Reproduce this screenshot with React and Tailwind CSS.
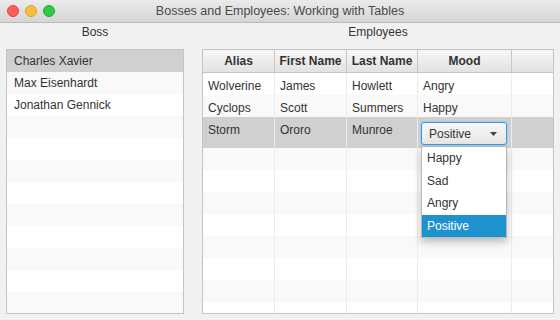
import React from 'react';

const bosses = ['Charles Xavier', 'Max Eisenhardt', 'Jonathan Gennick'];

const employees = [
    { alias: 'Wolverine', first: 'James', last: 'Howlett', mood: 'Angry' },
    { alias: 'Cyclops', first: 'Scott', last: 'Summers', mood: 'Happy' },
    { alias: 'Storm', first: 'Ororo', last: 'Munroe', mood: 'Positive', editing: true },
];

const moods = ['Happy', 'Sad', 'Angry', 'Positive'];

const cols = 'grid grid-cols-[72px_72px_71px_94px_1fr]';

const TitleBar = () => (
    <div className="relative h-[23px] shrink-0 flex items-center justify-center bg-gradient-to-b from-[#ebebeb] to-[#d5d5d5] border-b border-[#b9b9b9]">
        <div className="absolute left-[7px] top-[5px] flex gap-[6px]">
            <span className="w-[12px] h-[12px] rounded-full bg-[#fc605c] border border-[#e0443e]" />
            <span className="w-[12px] h-[12px] rounded-full bg-[#fdbc40] border border-[#dea123]" />
            <span className="w-[12px] h-[12px] rounded-full bg-[#34c84a] border border-[#27aa35]" />
        </div>
        <span className="text-[12.5px] text-[#4a4a4a]">Bosses and Employees: Working with Tables</span>
    </div>
);

const BossList = () => {
    const rows = Array.from({ length: 12 }, (_, i) => bosses[i] || '');
    return (
        <div className="flex flex-col w-[178px] min-h-0">
            <div className="h-[26px] shrink-0 pt-[2px] text-center text-[12px] leading-[14px] text-[#333]">Boss</div>
            <div className="flex-1 min-h-0 overflow-hidden border border-[#c4c4c4] bg-white">
                {rows.map((name, i) => (
                    <div
                        key={i}
                        className={
                            'h-[22px] px-[7px] flex items-center text-[12px] text-[#333] ' +
                            (i === 0 ? 'bg-[#d0d0d0]' : i % 2 ? 'bg-[#f9f9f9]' : 'bg-white')
                        }
                    >
                        {name}
                    </div>
                ))}
            </div>
        </div>
    );
};

const MoodCombo = () => (
    <div className="relative ml-[3px] mt-[5px] w-[86px]">
        <div className="h-[23px] rounded-[3px] border border-[#3b9ad6] shadow-[0_0_0_1px_#9fcfee] bg-gradient-to-b from-[#f7f7f7] to-[#e6e6e6] flex items-center justify-between pl-[7px] pr-[9px] text-[12px] text-[#333]">
            <span>Positive</span>
            <svg width="7" height="4" viewBox="0 0 7 4">
                <path d="M0 0 L7 0 L3.5 4 Z" fill="#444" />
            </svg>
        </div>
        <div className="absolute z-10 left-0 top-[24px] w-[86px] bg-white border border-[#b8b8b8] shadow-[0_4px_8px_rgba(0,0,0,0.25)]">
            {moods.map(m => (
                <div
                    key={m}
                    className={
                        'h-[22.5px] pl-[5px] flex items-center text-[12px] ' +
                        (m === 'Positive' ? 'bg-[#1e92cd] text-white' : 'text-[#333]')
                    }
                >
                    {m}
                </div>
            ))}
        </div>
    </div>
);

const EmployeeTable = () => {
    const empty = Array.from({ length: 8 }, (_, i) => i + 3);
    const cell = 'border-r border-[#ececec] px-[5px] text-[12px] text-[#333]';
    return (
        <div className="flex flex-col flex-1 min-h-0">
            <div className="h-[26px] shrink-0 pt-[2px] text-center text-[12px] leading-[14px] text-[#333]">Employees</div>
            <div className="flex-1 min-h-0 overflow-hidden border border-[#c4c4c4] bg-white">
                <div className={cols + ' h-[23px] bg-gradient-to-b from-[#f7f7f7] to-[#e2e2e2] border-b border-[#c4c4c4]'}>
                    {['Alias', 'First Name', 'Last Name', 'Mood', ''].map((h, i) => (
                        <div
                            key={i}
                            className={
                                'flex items-center justify-center text-[12px] font-bold text-[#333] ' +
                                (i < 4 ? 'border-r border-[#c8c8c8]' : '')
                            }
                        >
                            {h}
                        </div>
                    ))}
                </div>
                {employees.map((e, i) => (
                    <div
                        key={e.alias}
                        className={
                            cols +
                            ' ' +
                            (e.editing ? 'h-[31px] bg-[#d0d0d0]' : 'h-[22px] ' + (i % 2 ? 'bg-[#f9f9f9]' : 'bg-white'))
                        }
                    >
                        <div className={cell + ' pt-[4px]'}>{e.alias}</div>
                        <div className={cell + ' pt-[4px]'}>{e.first}</div>
                        <div className={cell + ' pt-[4px]'}>{e.last}</div>
                        <div className={e.editing ? 'border-r border-[#ececec]' : cell + ' pt-[4px]'}>
                            {e.editing ? <MoodCombo /> : e.mood}
                        </div>
                        <div />
                    </div>
                ))}
                {empty.map(i => (
                    <div key={i} className={cols + ' h-[22px] ' + (i % 2 ? 'bg-[#f9f9f9]' : 'bg-white')}>
                        <div className="border-r border-[#ececec]" />
                        <div className="border-r border-[#ececec]" />
                        <div className="border-r border-[#ececec]" />
                        <div className="border-r border-[#ececec]" />
                        <div />
                    </div>
                ))}
            </div>
        </div>
    );
};

const App = () => (
    <div className="w-[560px] h-[320px] flex flex-col bg-[#f1f1f1] font-['Liberation_Sans',Arial,sans-serif] overflow-hidden">
        <TitleBar />
        <div className="flex-1 min-h-0 flex gap-[18px] px-[6px] pb-[6px]">
            <BossList />
            <EmployeeTable />
        </div>
    </div>
);

export default App;
